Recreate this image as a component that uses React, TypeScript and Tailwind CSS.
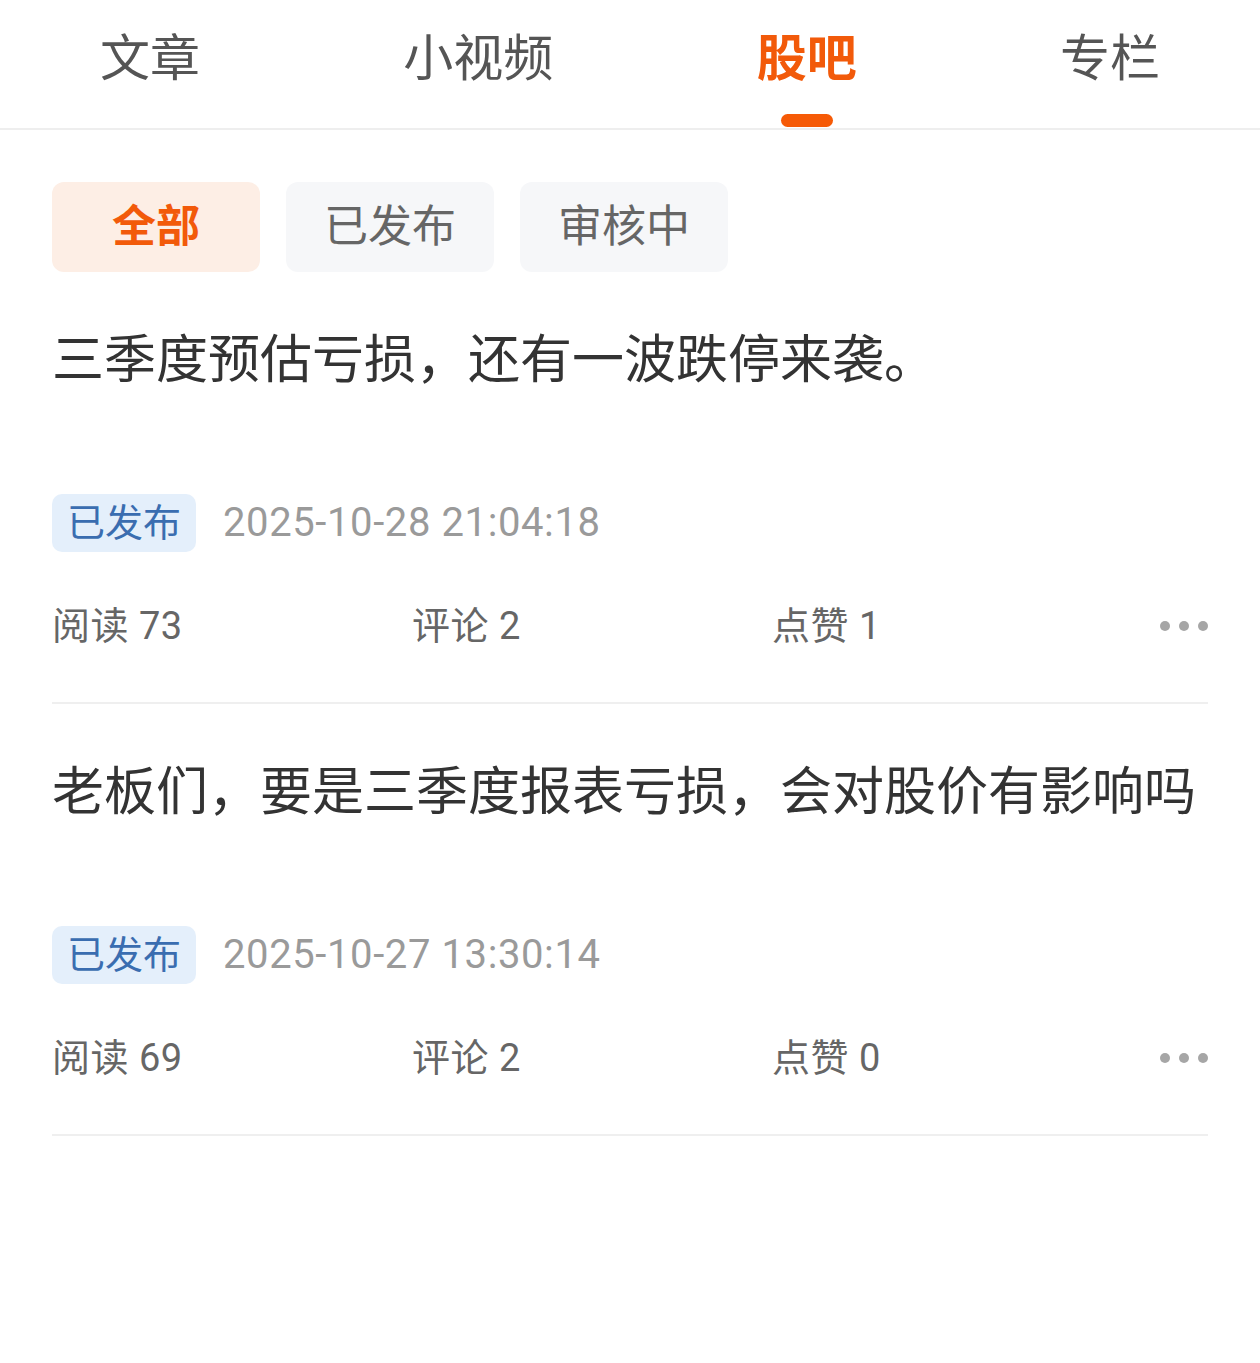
import { useState } from "react";

const tabs = ["文章", "小视频", "股吧", "专栏"];
const filters = ["全部", "已发布", "审核中"];

const posts = [
  {
    title: "三季度预估亏损，还有一波跌停来袭。",
    time: "2025-10-28 21:04:18",
    reads: 73,
    comments: 2,
    likes: 1,
  },
  {
    title: "老板们，要是三季度报表亏损，会对股价有影响吗",
    time: "2025-10-27 13:30:14",
    reads: 69,
    comments: 2,
    likes: 0,
  },
];

function PostItem({ post }: { post: (typeof posts)[number] }) {
  return (
    <div className="pt-[53px] pb-[48px] border-b-2 border-[#efefef]">
      <h3 className="text-[52px] leading-[72px] text-[#333333] whitespace-nowrap">{post.title}</h3>
      <div className="mt-[97px] flex items-center">
        <span className="h-[58px] px-[15px] flex items-center rounded-[10px] bg-[#e4effb] text-[#3a6db0] text-[38px] leading-none">
          已发布
        </span>
        <span className="ml-[27px] text-[40px] leading-none tracking-[0.6px] text-[#9a9a9a] font-['Roboto','Noto_Sans_CJK_SC',sans-serif]">
          {post.time}
        </span>
      </div>
      <div className="mt-[46px] h-[56px] flex items-center text-[38px] tracking-[0.5px] text-[#666666]">
        <span className="w-[360px]">阅读 {post.reads}</span>
        <span className="w-[360px]">评论 {post.comments}</span>
        <span className="w-[360px]">点赞 {post.likes}</span>
        <div className="ml-auto flex items-center gap-[9px]">
          <span className="w-[10px] h-[10px] rounded-full bg-[#a6a6a6]" />
          <span className="w-[10px] h-[10px] rounded-full bg-[#a6a6a6]" />
          <span className="w-[10px] h-[10px] rounded-full bg-[#a6a6a6]" />
        </div>
      </div>
    </div>
  );
}

export default function App() {
  const [activeTab, setActiveTab] = useState(2);
  const [activeFilter, setActiveFilter] = useState(0);

  return (
    <div className="w-[1260px] min-h-[1363px] bg-white font-['Roboto','Noto_Sans_CJK_SC',sans-serif]">
      {/* Top tabs */}
      <div className="h-[130px] flex justify-between px-[100px] border-b-2 border-[#eeeeee]">
        {tabs.map((t, i) => (
          <button
            key={t}
            onClick={() => setActiveTab(i)}
            className="flex flex-col items-center pt-[34px]"
          >
            <span
              className={`text-[50px] leading-[50px] ${
                i === activeTab ? "text-[#f25a0a] font-bold" : "text-[#555555]"
              }`}
            >
              {t}
            </span>
            <span
              className={`mt-[30px] w-[52px] h-[13px] rounded-full ${
                i === activeTab ? "bg-[#f65a06]" : "bg-transparent"
              }`}
            />
          </button>
        ))}
      </div>

      <div className="px-[52px]">
        {/* Filter chips */}
        <div className="pt-[52px] flex gap-[26px]">
          {filters.map((f, i) => (
            <button
              key={f}
              onClick={() => setActiveFilter(i)}
              className={`w-[208px] h-[90px] rounded-[12px] flex items-center justify-center text-[44px] ${
                i === activeFilter
                  ? "bg-[#fdeee5] text-[#f25a0a] font-bold"
                  : "bg-[#f6f7f9] text-[#666666]"
              }`}
            >
              {f}
            </button>
          ))}
        </div>

        {posts.map((p) => (
          <PostItem key={p.time} post={p} />
        ))}
      </div>
    </div>
  );
}
